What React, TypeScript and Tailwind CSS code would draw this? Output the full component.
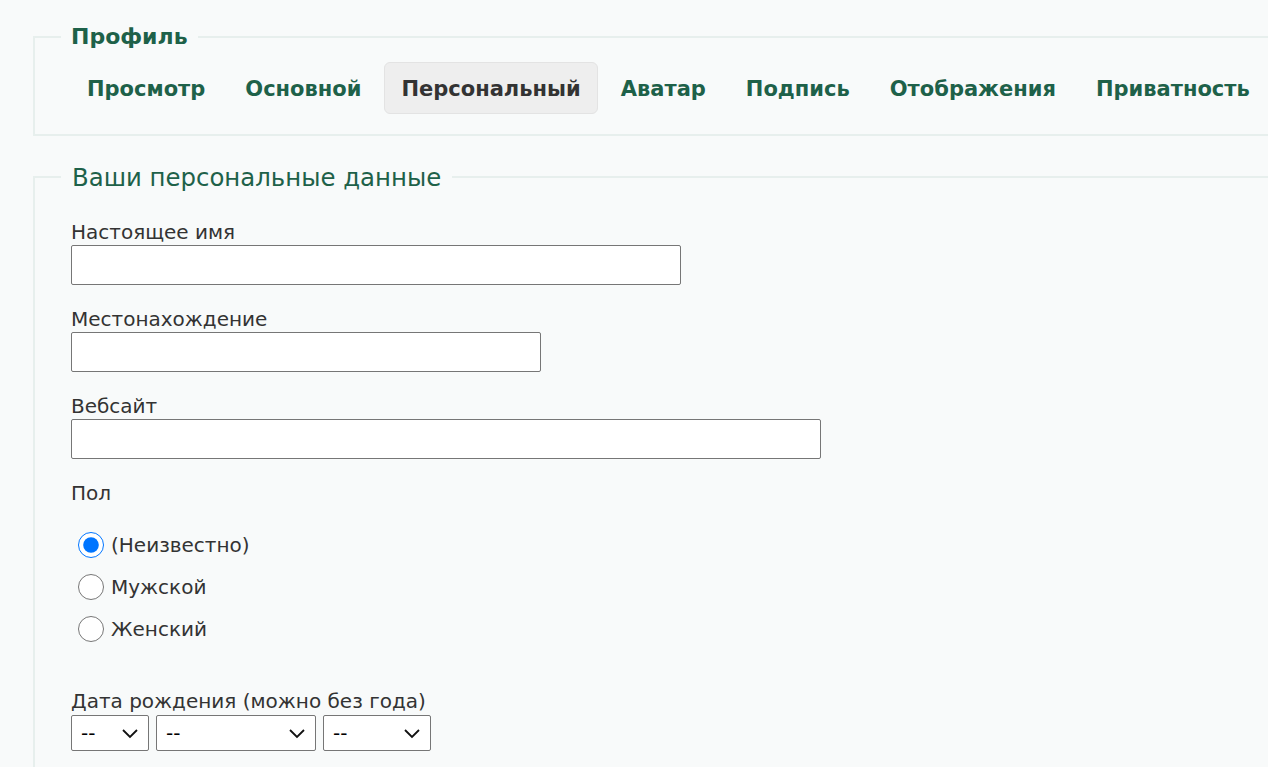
import React from "react"

const tabs = ["Просмотр", "Основной", "Персональный", "Аватар", "Подпись", "Отображения", "Приватность"]

const fields = [
  { label: "Настоящее имя", width: "w-[610px]" },
  { label: "Местонахождение", width: "w-[470px]" },
  { label: "Вебсайт", width: "w-[750px]" },
]

const genders = ["(Неизвестно)", "Мужской", "Женский"]

const selects = [
  { width: "w-[78px]" },
  { width: "w-[160px]" },
  { width: "w-[108px]" },
]

function Chevron() {
  return (
    <svg width="18" height="12" viewBox="0 0 18 12" fill="none" stroke="#111" strokeWidth="1.8">
      <path d="M2 3l7 7 7-7" />
    </svg>
  )
}

export default function App() {
  return (
    <div className="min-h-screen overflow-hidden bg-[#f8fafa] pt-[23px] font-['DejaVu_Sans',sans-serif] text-[#333]">
      {/* Profile tabs */}
      <fieldset className="ml-[33px] w-[1300px] border-2 border-[#e7efed] pl-[26px] pb-[20px]">
        <legend className="px-[10px] text-[22px] font-bold leading-[28px] text-[#1e6149]">Профиль</legend>
        <div className="flex gap-[6px] pl-[9px] pt-[11px]">
          {tabs.map((tab) => {
            const active = tab === "Персональный"
            return (
              <div
                key={tab}
                className={
                  active
                    ? "rounded-[6px] border border-[#e3e3e3] bg-[#eeeeee] px-[16px] pt-[13px] pb-[10px] text-[21px] font-bold leading-[27px] text-[#333]"
                    : "rounded-[6px] border border-transparent px-[16px] pt-[13px] pb-[10px] text-[21px] font-bold leading-[27px] text-[#1e6149]"
                }
              >
                {tab}
              </div>
            )
          })}
        </div>
      </fieldset>

      {/* Personal data */}
      <fieldset className="mt-[25px] ml-[33px] w-[1300px] border-2 border-[#e7efed] pl-[26px] pb-[20px]">
        <legend className="px-[11px] pt-[2px] text-[24.4px] leading-[30px] text-[#1e6149]">Ваши персональные данные</legend>
        <div className="flex flex-col pl-[10px] pt-[27px] text-[20px] leading-[24px]">
          {fields.map((f) => (
            <div key={f.label} className="mb-[22px] flex flex-col">
              <label>{f.label}</label>
              <input
                type="text"
                className={`${f.width} mt-[1px] h-[40px] rounded-[2px] border border-[#767676] bg-white`}
              />
            </div>
          ))}

          <label>Пол</label>
          <div className="mt-[19px] flex flex-col">
            {genders.map((g, i) => (
              <label key={g} className="flex h-[42px] items-center gap-[7px] pl-[7px]">
                <input
                  type="radio"
                  name="gender"
                  defaultChecked={i === 0}
                  className="m-0 h-[26px] w-[26px] accent-[#0075ff]"
                />
                <span>{g}</span>
              </label>
            ))}
          </div>

          <label className="mt-[39px]">Дата рождения (можно без года)</label>
          <div className="mt-[2px] flex gap-[7px]">
            {selects.map((s, i) => (
              <div key={i} className={`relative ${s.width} h-[36px]`}>
                <select className="h-full w-full appearance-none rounded-[2px] border border-[#767676] bg-white pl-[9px] text-[20px] text-black">
                  <option>--</option>
                </select>
                <span className="pointer-events-none absolute right-[10px] top-[12px]">
                  <Chevron />
                </span>
              </div>
            ))}
          </div>
        </div>
      </fieldset>
    </div>
  )
}
